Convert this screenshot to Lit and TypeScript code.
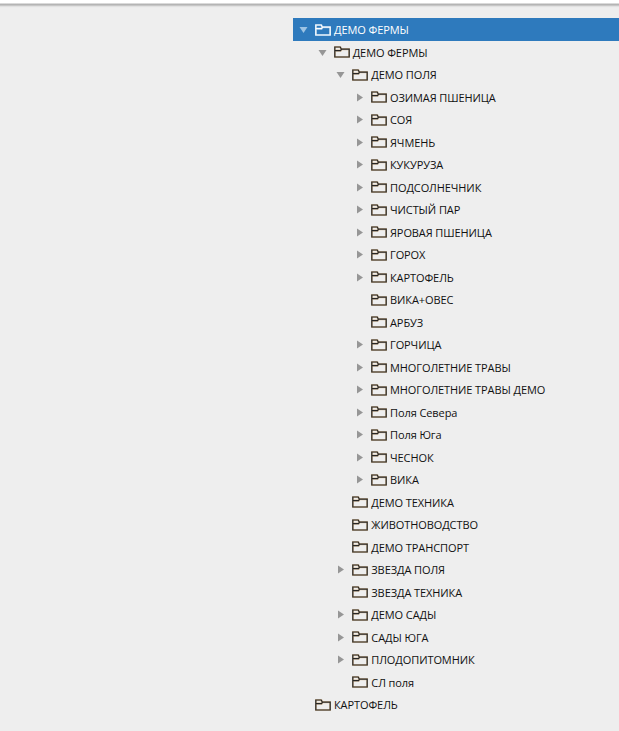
import { LitElement, html, css, svg } from "lit";
import { customElement } from "lit/decorators.js";

type Row = [level: number, arrow: "" | "open" | "closed", label: string];

const rows: Row[] = [
  [0, "open", "ДЕМО ФЕРМЫ"],
  [1, "open", "ДЕМО ФЕРМЫ"],
  [2, "open", "ДЕМО ПОЛЯ"],
  [3, "closed", "ОЗИМАЯ ПШЕНИЦА"],
  [3, "closed", "СОЯ"],
  [3, "closed", "ЯЧМЕНЬ"],
  [3, "closed", "КУКУРУЗА"],
  [3, "closed", "ПОДСОЛНЕЧНИК"],
  [3, "closed", "ЧИСТЫЙ ПАР"],
  [3, "closed", "ЯРОВАЯ ПШЕНИЦА"],
  [3, "closed", "ГОРОХ"],
  [3, "closed", "КАРТОФЕЛЬ"],
  [3, "", "ВИКА+ОВЕС"],
  [3, "", "АРБУЗ"],
  [3, "closed", "ГОРЧИЦА"],
  [3, "closed", "МНОГОЛЕТНИЕ ТРАВЫ"],
  [3, "closed", "МНОГОЛЕТНИЕ ТРАВЫ ДЕМО"],
  [3, "closed", "Поля Севера"],
  [3, "closed", "Поля Юга"],
  [3, "closed", "ЧЕСНОК"],
  [3, "closed", "ВИКА"],
  [2, "", "ДЕМО ТЕХНИКА"],
  [2, "", "ЖИВОТНОВОДСТВО"],
  [2, "", "ДЕМО ТРАНСПОРТ"],
  [2, "closed", "ЗВЕЗДА ПОЛЯ"],
  [2, "", "ЗВЕЗДА ТЕХНИКА"],
  [2, "closed", "ДЕМО САДЫ"],
  [2, "closed", "САДЫ ЮГА"],
  [2, "closed", "ПЛОДОПИТОМНИК"],
  [2, "", "СЛ поля"],
  [0, "", "КАРТОФЕЛЬ"],
];

const folderPath = "M0.8 11V1H6.2L7.4 3.2H15.2V11Z M0.8 4.6H6.6L7.4 3.2";
const folder = svg`<svg class="folder" width="16" height="12" viewBox="0 0 16 12" fill="none">
  <path class="halo" d=${folderPath} />
  <path class="line" d=${folderPath} />
</svg>`;

@customElement("app-root")
export class AppRoot extends LitElement {
  static styles = css`
    :host {
      display: block;
      height: 731px;
      overflow: hidden;
      background: #eeeeee;
      font-family: "Open Sans", "Noto Sans", sans-serif;
      font-size: 11px;
      letter-spacing: -0.09px;
      color: #111111;
    }
    .topbar {
      height: 8px;
      background: linear-gradient(
        to bottom,
        #ffffff 0,
        #ffffff 3px,
        #b4b4b4 4px,
        #b4b4b4 5px,
        #d8d8d8 6px,
        #eaeaea 7px,
        #eeeeee 8px
      );
    }
    .tree {
      margin: 10.25px 0 0 293px;
      display: flex;
      flex-direction: column;
    }
    .row {
      height: 22.5px;
      display: flex;
      align-items: center;
      white-space: nowrap;
    }
    .row.selected {
      background: #2e7abd;
      color: #ffffff;
    }
    .indent-0 { padding-left: 6px; }
    .indent-1 { padding-left: 24.7px; }
    .indent-2 { padding-left: 43.3px; }
    .indent-3 { padding-left: 62px; }
    .arrow {
      width: 9px;
      height: 9px;
      margin-right: 7px;
      flex: none;
      fill: #969696;
    }
    .selected .arrow { fill: #9cc3e4; }
    .folder {
      flex: none;
      margin-right: 3px;
    }
    .halo { stroke: #c9a26d; stroke-width: 2.2; opacity: 0.6; }
    .line { stroke: #262626; stroke-width: 1.2; }
    .selected .halo { stroke: #bcd8f0; }
    .selected .line { stroke: #ffffff; }
    .label { line-height: 1; }
  `;

  private arrow(kind: Row[1]) {
    if (kind === "open") {
      return html`<svg class="arrow" viewBox="0 0 9 9"><path d="M0.5 2h8L4.5 8z" /></svg>`;
    }
    if (kind === "closed") {
      return html`<svg class="arrow" viewBox="0 0 9 9"><path d="M2 0.5v8L8 4.5z" /></svg>`;
    }
    return html`<span class="arrow"></span>`;
  }

  render() {
    return html`
      <div class="topbar"></div>
      <div class="tree">
        ${rows.map(
          ([level, arrow, label], i) => html`
            <div class="row indent-${level} ${i === 0 ? "selected" : ""}">
              ${this.arrow(arrow)}${folder}<span class="label">${label}</span>
            </div>
          `
        )}
      </div>
    `;
  }
}
